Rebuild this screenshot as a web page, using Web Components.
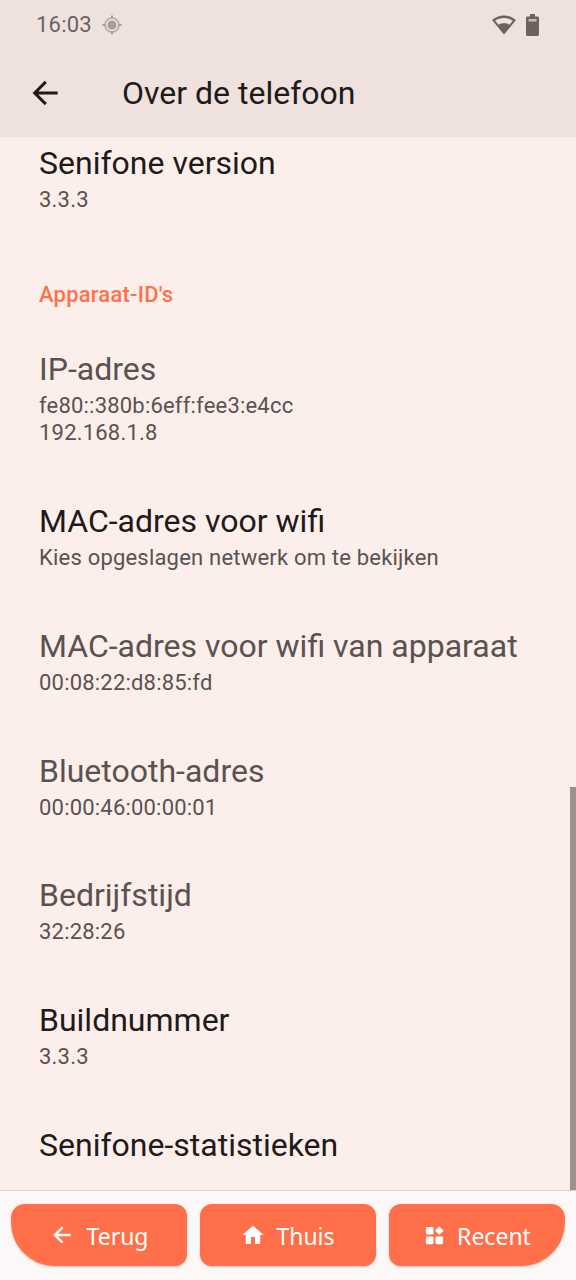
<!DOCTYPE html>
<html lang="nl"><head><meta charset="utf-8"><title>Over de telefoon</title>
<style>
html,body{margin:0;padding:0;height:100%;overflow:hidden}
body{font-family:Roboto,"Liberation Sans",sans-serif;background:#fceeeb}
</style></head><body>
<about-screen>
  <status-bar></status-bar>
  <app-toolbar>Over de telefoon</app-toolbar>
  <scroll-list>
    <info-row title-text="Senifone version"><span>3.3.3</span></info-row>
    <section-header>Apparaat-ID's</section-header>
    <info-row dim title-text="IP-adres"><span>fe80::380b:6eff:fee3:e4cc</span><span>192.168.1.8</span></info-row>
    <info-row title-text="MAC-adres voor wifi"><span>Kies opgeslagen netwerk om te bekijken</span></info-row>
    <info-row dim title-text="MAC-adres voor wifi van apparaat"><span>00:08:22:d8:85:fd</span></info-row>
    <info-row dim title-text="Bluetooth-adres"><span>00:00:46:00:00:01</span></info-row>
    <info-row dim title-text="Bedrijfstijd"><span>32:28:26</span></info-row>
    <info-row title-text="Buildnummer"><span>3.3.3</span></info-row>
    <info-row title-text="Senifone-statistieken"></info-row>
  </scroll-list>
  <nav-bar>
    <nav-button shape="left" label="Terug"><svg viewBox="0 0 24 24" width="26" height="26"><path d="M20 12H5.500M12.500 5l-7 7 7 7" fill="none" stroke="#fff" stroke-width="2.200"/></svg></nav-button>
    <nav-button label="Thuis"><svg viewBox="0 0 24 24" width="24" height="24"><path d="M10 20.500v-6.500h4v6.500c0 .3.2.5.5.5h4.200c.3 0 .5-.2.5-.5V12h2.300c.4 0 .6-.5.3-.8L12.400 2.900c-.2-.2-.6-.2-.8 0L2.200 11.200c-.3.3-.1.8.3.8h2.300v8.500c0 .3.2.5.5.5h4.200c.3 0 .5-.2.5-.5z" fill="#fff"/></svg></nav-button>
    <nav-button shape="right" label="Recent"><svg viewBox="0 0 24 24" width="23" height="23"><g fill="#fff"><rect x="3" y="3" width="8" height="8" rx="1.500"/><rect x="3" y="13" width="8" height="8" rx="1.500"/><rect x="13" y="13" width="8" height="8" rx="1.500"/><path d="M17 2.400l4.400 4.600-4.400 4.600-4.400-4.600z"/></g></svg></nav-button>
  </nav-bar>
</about-screen>
<script>
function def(name, css, html){
  customElements.define(name, class extends HTMLElement{
    constructor(){super();const s=this.attachShadow({mode:'open'});
      s.innerHTML='<style>'+css+'</style>'+(typeof html==='function'?html(this):html);}
  });
}
def('about-screen',':host{display:flex;flex-direction:column;position:relative;width:576px;height:1280px;overflow:hidden}','<slot></slot>');
def('status-bar',
 ':host{display:flex;align-items:center;height:50px;box-sizing:border-box;padding:0 37.500px 0 36px;background:#eee1de;color:#6c6361;font:400 22px/50px Roboto,sans-serif;flex:none}'
 +'.t{letter-spacing:.2px}.g{margin-left:9px;display:flex}.sp{flex:1}.r{display:flex;align-items:center;gap:10px}svg{display:block}',
 `<span class="t">16:03</span>
  <span class="g"><svg width="22" height="22" viewBox="0 0 22 22"><circle cx="11" cy="11" r="4.500" fill="#a89e9b"/><circle cx="11" cy="11" r="7" fill="none" stroke="#b4aaa7" stroke-width="1.600"/><path d="M11 1.500v3M11 17.500v3M1.500 11h3M17.500 11h3" stroke="#a89e9b" stroke-width="2"/></svg></span>
  <span class="sp"></span>
  <span class="r"><svg width="24" height="20" viewBox="0 0 24 20"><path d="M12 .5C7.500.5 3.500 2 0 5l12 14.500L24 5C20.500 2 16.500.5 12 .5z" fill="#6c6361"/><path d="M12 3C8.500 3 5.500 4 3.200 5.700L6.500 9.700c1.600-.9 3.400-1.400 5.500-1.400s3.900.5 5.500 1.400l3.300-4C18.500 4 15.500 3 12 3z" fill="#eee1de"/></svg>
  <svg width="13" height="22" viewBox="0 0 13 22" style="margin-top:-1px"><path d="M4 0h5v2.500h2.500c.8 0 1.500.7 1.500 1.500v16.500c0 .8-.7 1.500-1.500 1.500h-10C.7 22 0 21.300 0 20.500V4c0-.8.700-1.500 1.500-1.500H4z" fill="#6c6361"/><rect x="2.500" y="5" width="8" height="2.500" fill="#c9bdba"/></svg></span>`);
def('app-toolbar',
 ':host{display:flex;align-items:center;height:87px;flex:none;background:#eee1de;color:#201a19;font:400 32px/36px Roboto,sans-serif;padding:0 0 1px 26px;box-sizing:border-box}svg{display:block;margin-right:58px}',
 '<svg width="38" height="38" viewBox="0 0 24 24"><path d="M20 12H5.500M12.500 5l-7 7 7 7" fill="none" stroke="#201a19" stroke-width="1.900"/></svg><slot></slot>');
def('scroll-list',
 ':host{display:block;flex:1;min-height:0;position:relative;overflow:hidden;background:#fceeeb}.in{margin-top:-20px}.bar{position:absolute;right:0;bottom:0;width:6px;height:403px;background:#9d918e}',
 '<div class="in"><slot></slot></div><div class="bar"></div>');
def('section-header',
 ':host{display:block;padding:40px 39px 15.500px;color:#ff7149;font:500 22px/26px Roboto,sans-serif;letter-spacing:.2px}','<slot></slot>');
def('info-row',
 ':host{display:block;padding:28px 39px 28.800px;font-family:Roboto,sans-serif;color:#201a19}:host([dim]){color:#5b5250}.t{font:400 32px/36px Roboto,sans-serif;white-space:nowrap}.s{display:flex;flex-direction:column;margin-top:5px;color:#5a5250;font:400 22px/27px Roboto,sans-serif;letter-spacing:.2px}',
 e=>'<div class="t">'+e.getAttribute('title-text')+'</div><div class="s"><slot></slot></div>');
def('nav-bar',
 ':host{display:flex;flex:none;gap:13px;height:90px;box-sizing:border-box;padding:13px 11px 14px;background:#fdf8f8;border-top:1px solid #e2d6d3}','<slot></slot>');
def('nav-button',
 ':host{flex:1;display:flex;align-items:center;justify-content:center;gap:11px;background:#ff704a;color:#fff;border-radius:12px;font:400 23px/30px "Noto Sans",sans-serif;box-shadow:0 1px 2px rgba(120,50,30,.3)}:host([shape=left]){border-radius:14px 12px 12px 44px}:host([shape=right]){border-radius:12px 14px 44px 12px}svg,::slotted(svg){display:block}span{padding-top:1px}',
 e=>'<slot></slot><span>'+e.getAttribute('label')+'</span>');
</script>
</body></html>
